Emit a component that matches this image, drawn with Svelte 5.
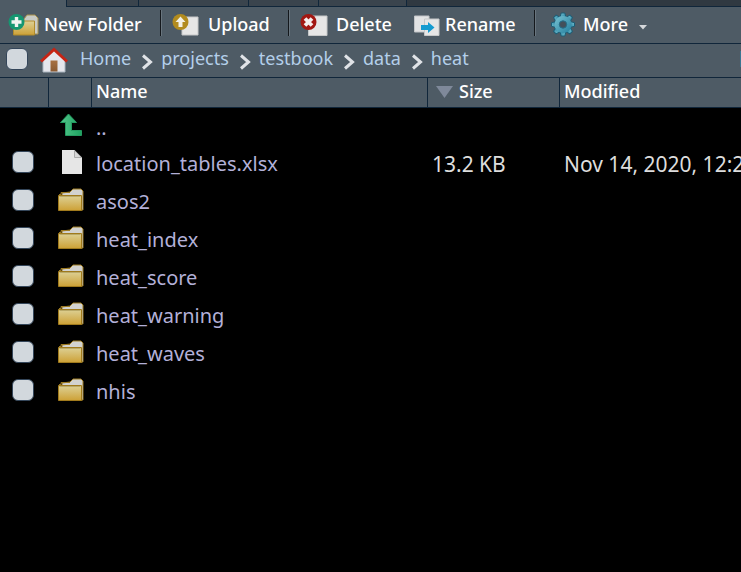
<script>
  const tabs = [67, 72, 110, 70, 88];
  const actions = [
    { label: 'New Folder', kind: 'new', w: 162 },
    { label: 'Upload', kind: 'upload', w: 128 },
    { label: 'Delete', kind: 'delete', w: 114 },
    { label: 'Rename', kind: 'rename', w: 132 },
    { label: 'More', kind: 'more', w: 130 }
  ];
  const crumbs = ['Home', 'projects', 'testbook', 'data', 'heat'];
  const files = [
    { name: 'location_tables.xlsx', size: '13.2 KB', modified: 'Nov 14, 2020, 12:2' },
    { name: 'asos2', folder: true },
    { name: 'heat_index', folder: true },
    { name: 'heat_score', folder: true },
    { name: 'heat_warning', folder: true },
    { name: 'heat_waves', folder: true },
    { name: 'nhis', folder: true }
  ];
</script>

{#snippet folder()}
  <path d="M4 5 L12 4 L15 1 H23 L25 3 V22 H4Z" fill="#d2d2d0" stroke="#9c7a22" />
  <path d="M1 6.5 H3 V4.500 H12" fill="none" stroke="#9c7a22" />
  <path d="M.5 7.500 H23.500 V22.500 H.5Z" fill="url(#gold)" stroke="#a07a1c" />
  <path d="M1.500 8.500H22.500" stroke="#b9a968" />
{/snippet}

<svg class="defs" aria-hidden="true">
  <defs>
    <linearGradient id="gold" x1="0" y1="0" x2="0" y2="1"><stop offset="0" stop-color="#ddd196" /><stop offset="1" stop-color="#cda136" /></linearGradient>
    <linearGradient id="teal" x1="0" y1="0" x2="1" y2="1"><stop offset="0" stop-color="#79c3d2" /><stop offset="1" stop-color="#237f9f" /></linearGradient>
    <linearGradient id="green" x1="0" y1="0" x2="1" y2="0"><stop offset="0" stop-color="#53c68b" /><stop offset="1" stop-color="#1da260" /></linearGradient>
    <linearGradient id="wood" x1="0" y1="0" x2="0" y2="1"><stop offset="0" stop-color="#a87143" /><stop offset="1" stop-color="#8a5a32" /></linearGradient>
  </defs>
</svg>

<main>
  <div class="tabs">
    {#each tabs as w, i}<span class:active={i === 0} style="width:{w}px"></span>{/each}
    <span class="rest"></span>
  </div>

  <div class="toolbar">
    {#each actions as a}
      <button class={a.kind} style="width:{a.w}px">
        <svg width="32" height="26" viewBox="0 0 32 26" aria-hidden="true">
          {#if a.kind === 'new'}
            <path d="M16 7 L19 3 H27 L30 6 V22 H10 V9 H16Z" fill="#c9cbc5" stroke="#a8914d" />
            <path d="M5.500 9 H26.500 V23 H5.500Z" fill="url(#gold)" stroke="#b08b2c" />
            <circle cx="8.500" cy="10" r="8" fill="#159671" />
            <path d="M8.500 5v10M3.500 10h10" stroke="#f0f3f1" stroke-width="3.400" />
          {:else if a.kind === 'upload'}
            <path d="M10 5H26V23H10Z" fill="#e6e6e6" stroke="#c6c8c9" />
            <circle cx="8.500" cy="10" r="8" fill="#b28b1e" />
            <path d="M8.500 4.500L13.500 10H10.500V15H6.500V10H3.500Z" fill="#f3f0e4" />
          {:else if a.kind === 'delete'}
            <path d="M8.500 4H27V23.500H8.500Z" fill="#e6e6e6" stroke="#c6c8c9" />
            <circle cx="8.500" cy="10" r="8" fill="#a21712" />
            <path d="M5 6.500l7 7M12 6.500l-7 7" stroke="#f4eded" stroke-width="3.800" />
          {:else if a.kind === 'rename'}
            <path d="M1.500 4H16V20H1.500Z" fill="#e2e3e4" stroke="#c2c5c8" />
            <path d="M11.500 7H26V23.500H11.500Z" fill="#e6e6e6" stroke="#c6c8c9" />
            <path d="M8 13H15V10L21.500 15.500L15 21V18H8Z" fill="#159bd0" />
          {:else}
            <g transform="translate(12 12.500)">
              <g stroke="#1c5c75" stroke-width="1">
                {#each [0, 45, 90, 135, 180, 225, 270, 315] as r}
                  <path d="M-3 -7 L-1.800 -11.500H1.800L3 -7Z" fill="url(#teal)" transform="rotate({r})" />
                {/each}
              </g>
              <circle r="8.500" fill="url(#teal)" />
              <circle r="3.700" fill="#43505a" stroke="#246f8a" />
            </g>
          {/if}
        </svg>
        <span>{a.label}</span>
        {#if a.kind === 'more'}
          <svg class="caret" width="10" height="6" viewBox="0 0 10 6" aria-hidden="true"><path d="M1 1H9L5 5.500Z" fill="#d5d8db" /></svg>
        {/if}
      </button>
    {/each}
  </div>

  <nav>
    <input type="checkbox" aria-label="Select all" />
    <svg class="house" width="28" height="26" viewBox="0 0 28 26" aria-hidden="true">
      <path d="M3 12 L14 3 L25 12 V25 H3Z" fill="#e5e6ec" stroke="#aab6c0" />
      <path d="M10.500 13.500H17.500V24.500H10.500Z" fill="url(#wood)" />
      <path d="M1 14.500L14 2.500L27 14.500" fill="none" stroke="#c62414" stroke-width="3" />
    </svg>
    {#each crumbs as c, i}
      {#if i}
        <svg class="sep" width="12" height="18" viewBox="0 0 12 18" aria-hidden="true"><path d="M2 2.500L9.500 9L2 15.500" fill="none" stroke="#e0e3e7" stroke-width="3" /></svg>
      {/if}
      <a href="#{c}">{c}</a>
    {/each}
    <span class="edge"></span>
  </nav>

  <table>
    <thead>
      <tr>
        <th class="check"></th><th class="icon"></th><th class="name">Name</th>
        <th class="size"><svg width="17" height="12" viewBox="0 0 17 12" aria-hidden="true"><path d="M0 0H17L8.500 12Z" fill="#7f899a" /></svg>Size</th>
        <th>Modified</th>
      </tr>
    </thead>
    <tbody>
      <tr class="up">
        <td></td>
        <td><svg width="26" height="24" viewBox="0 0 26 24" aria-hidden="true"><path d="M10.500 1L18.500 9.500H13.500V17.500H23.500V22.500H7.500V9.500H2.500Z" fill="url(#green)" stroke="#259b61" /></svg></td>
        <td><a href="#parent">..</a></td><td></td><td></td>
      </tr>
      {#each files as f}
        <tr>
          <td><input type="checkbox" aria-label={f.name} /></td>
          <td>
            <svg width="26" height="24" viewBox="0 0 26 24" aria-hidden="true">
              {#if f.folder}{@render folder()}{:else}
                <path d="M4 0H16.500L24 7.500V24H4Z" fill="#e6e6e6" />
                <path d="M16.500 .5V7.500H23.500Z" fill="#d7d7d7" stroke="#aaa" />
              {/if}
            </svg>
          </td>
          <td><a href="#{f.name}">{f.name}</a></td>
          <td>{f.size ?? ''}</td>
          <td>{f.modified ?? ''}</td>
        </tr>
      {/each}
    </tbody>
  </table>
</main>

<style>
  :global(body) { margin: 0; background: #000; }
  main { min-height: 100vh; overflow: hidden; background: #000; color: #ddd; font: 20px/28px "Noto Sans", "Open Sans", sans-serif; }
  .defs { position: absolute; width: 0; height: 0; }
  .tabs { display: flex; height: 7px; background: #4e5b65; }
  .tabs span { box-sizing: border-box; flex: none; background: #3a444d; border-right: 1px solid #10263a; border-bottom: 1px solid #10263a; }
  .tabs .active { background: #4e5b65; border-bottom: 0; }
  .tabs .rest { flex: 1; background: #303941; border-right: 0; }
  .toolbar { display: flex; height: 36px; background: #4e5b65; border-bottom: 1px solid #10263a; }
  button { position: relative; box-sizing: border-box; flex: none; display: flex; align-items: center; padding: 0 0 0 8px; border: 0; background: none; color: #fff; font: 500 18px/24px "Noto Sans", sans-serif; white-space: nowrap; }
  button span { padding-bottom: 2px; }
  button svg { flex: none; margin-right: 4px; }
  .upload, .delete { padding-left: 10px; }
  .rename { padding-left: 9px; }
  .rename svg { margin-right: 0; }
  .more { padding-left: 15px; }
  .more svg { margin-right: 0; }
  .more .caret { margin: 4px 0 0 10px; }
  .new::after, .upload::after, .rename::after { content: ""; position: absolute; right: 0; top: 3px; width: 2px; height: 26px; background: linear-gradient(90deg, #14181c 50%, #69757e 50%); }
  nav { box-sizing: border-box; display: flex; align-items: center; height: 34px; padding: 0 0 4px 6px; background: #4e5b65; border-bottom: 1px solid #10263a; font-size: 18px; }
  nav a { padding-bottom: 2px; color: #b4cfea; }
  a { color: #b3b0d8; text-decoration: none; }
  .house { margin: 2px 12px 0 12px; }
  .sep { flex: none; margin: 6px 8px 0 10px; }
  .edge { width: 1px; height: 16px; margin-left: auto; background: #3c7591; }
  input { appearance: none; display: block; box-sizing: border-box; width: 22px; height: 22px; margin: 0; border: 1px solid #34465a; border-radius: 6px; background: #d2d8dd; }
  table { width: 100%; table-layout: fixed; border-collapse: separate; border-spacing: 0; }
  th { box-sizing: border-box; height: 30px; padding: 0 4px 4px; background: #4e5b65; border-right: 1px solid #10263a; border-bottom: 1px solid #10263a; color: #fff; font: 500 18px/24px "Noto Sans", sans-serif; text-align: left; }
  th:last-child { border-right: 0; }
  .check { width: 49px; }
  .icon { width: 43px; }
  .name { width: 336px; }
  .size { width: 132px; padding-left: 8px; }
  .size svg { margin-right: 6px; }
  td { box-sizing: border-box; height: 38px; padding: 4px 0 0 4px; white-space: nowrap; vertical-align: middle; }
  td:nth-child(n + 4) { font-size: 21px; }
  td:first-child { padding: 0 0 0 12px; }
  td:nth-child(2) { padding: 0 0 0 9px; }
  .up td { height: 35px; }
  .up td:nth-child(2) { padding-bottom: 2px; }
  td svg { display: block; }
</style>
